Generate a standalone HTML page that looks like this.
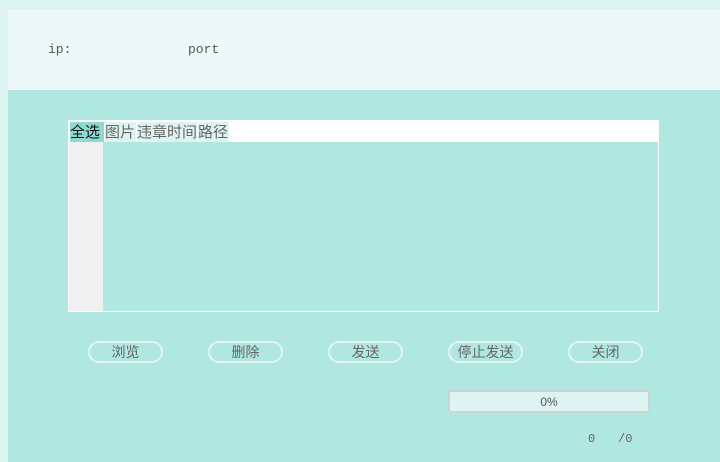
<!DOCTYPE html>
<html><head><meta charset="utf-8"><style>
*{margin:0;padding:0;box-sizing:border-box}
body{width:720px;height:462px;background:#dcf4f1;position:relative;overflow:hidden;font-family:"Liberation Sans","Noto Sans CJK SC",sans-serif;color:#666}
.top{position:absolute;left:8px;top:10px;width:712px;height:80px;background:#edf9f8}
.mono{position:absolute;font-family:"Liberation Mono",monospace;font-size:13px;color:#555}
.main{position:absolute;left:8px;top:90px;width:712px;height:372px;background:#b0e7e1}
.tbl{position:absolute;left:68px;top:120px;width:591px;height:192px;border:1px solid #fff;background:#b0e7e1}
.hdr{position:absolute;left:0;top:0;width:589px;height:21px;background:#fff}
.lc{position:absolute;left:0;top:21px;width:34px;height:169px;background:#f0f0f0}
.h{position:absolute;top:1px;height:20px;font-size:15px;line-height:22px;background:#dff4f2;color:#666}
.btn{position:absolute;top:341px;width:75px;height:22px;border:2px solid #e2f5f3;border-radius:11px;font-size:14px;line-height:19px;text-align:center;color:#666}
.prog{position:absolute;left:448px;top:390px;width:202px;height:23px;border:2px solid #cdd4d4;border-radius:3px;background:#ddf4f2;font-size:12px;line-height:20px;text-align:center;color:#555}
</style></head><body>
<div class="top"></div>
<div class="mono" style="left:48px;top:42px">ip:</div>
<div class="mono" style="left:188px;top:42px">port</div>
<div class="main"></div>
<div class="tbl">
<div class="hdr"></div>
<div class="lc"></div>
<div class="h" style="left:1px;width:34px;background:#8fd9d3;color:#111">全选</div>
<div class="h" style="left:36px;width:31px">图片</div>
<div class="h" style="left:68px;width:60px">违章时间</div>
<div class="h" style="left:129px;width:31px">路径</div>
</div>
<div class="btn" style="left:88px">浏览</div>
<div class="btn" style="left:208px">删除</div>
<div class="btn" style="left:328px">发送</div>
<div class="btn" style="left:448px">停止发送</div>
<div class="btn" style="left:568px">关闭</div>
<div class="prog">0%</div>
<div class="mono" style="left:588px;top:432px;font-size:12px;color:#666">0</div>
<div class="mono" style="left:618px;top:432px;font-size:12px;color:#666">/0</div>
</body></html>
